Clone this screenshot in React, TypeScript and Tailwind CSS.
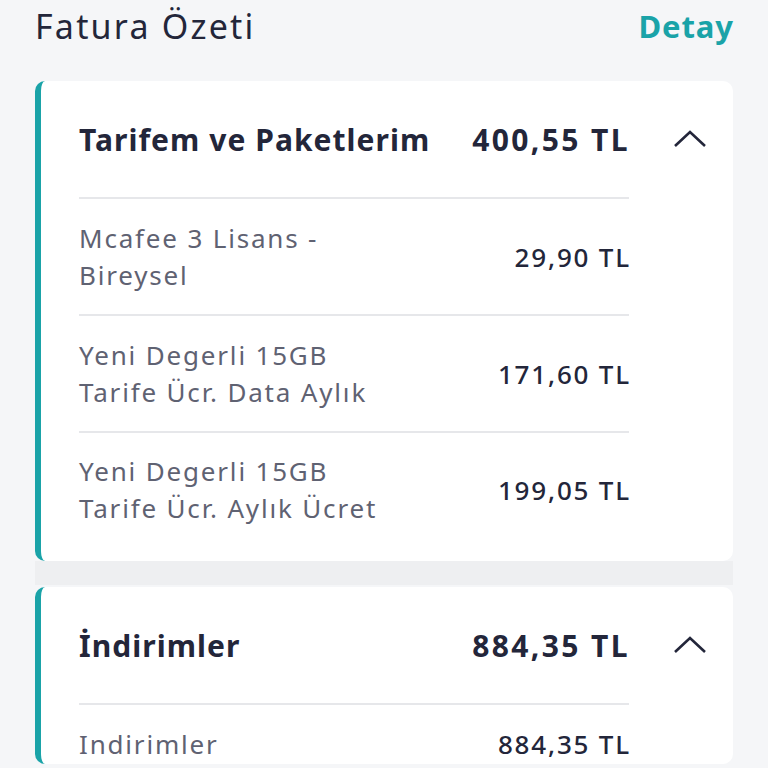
const tarife = [
  { ad: ['Mcafee 3 Lisans -', 'Bireysel'], tutar: '29,90 TL' },
  { ad: ['Yeni Degerli 15GB', 'Tarife Ücr. Data Aylık'], tutar: '171,60 TL' },
  { ad: ['Yeni Degerli 15GB', 'Tarife Ücr. Aylık Ücret'], tutar: '199,05 TL' },
]

function Chevron() {
  return (
    <svg width="34" height="20" viewBox="0 0 34 20" className="ml-[43px] shrink-0">
      <polyline points="2,17 17,3 32,17" fill="none" stroke="#23263a" strokeWidth="2.6" />
    </svg>
  )
}

function Kalem({ ad, tutar, son }: { ad: string[]; tutar: string; son?: boolean }) {
  return (
    <div className={`flex items-center justify-between ${son ? 'pt-[20px] pb-[34px]' : 'border-b-2 border-[#e6e7ea] pt-[21px] pb-[20px]'}`}>
      <div className="text-[26px] leading-[37px] tracking-[0.07em] text-[#5f6272]">
        {ad.map((s) => <div key={s}>{s}</div>)}
      </div>
      <span className="-mr-[2px] text-[26px] font-medium tracking-[0.07em] text-[#23263a]">{tutar}</span>
    </div>
  )
}

function Kart({ baslik, toplam, children }: { baslik: string; toplam: string; children: React.ReactNode }) {
  return (
    <div className="rounded-[10px] border-l-[6px] border-[#1aa3a8] bg-white">
      <div className="ml-[38px] mr-[26px] flex h-[116px] items-center">
        <span className="flex-1 text-[30px] font-bold tracking-[0.035em] text-[#23263a]">{baslik}</span>
        <span className="text-[30px] font-bold tracking-[0.08em] text-[#23263a]">{toplam}</span>
        <Chevron />
      </div>
      <div className="ml-[38px] mr-[104px] border-t-2 border-[#e6e7ea]">{children}</div>
    </div>
  )
}

export default function App() {
  return (
    <div className="h-[768px] overflow-hidden bg-[#f5f6f8] px-[35px]" style={{ fontFamily: '"Noto Sans", Lato, sans-serif' }}>
      <div className="flex items-center justify-between pt-[2px]">
        <h1 className="text-[34px] leading-[48px] tracking-[0.065em] text-[#23263a]">Fatura Özeti</h1>
        <span className="-mr-[1px] text-[31px] font-bold tracking-[0.03em] text-[#1aa3a8]">Detay</span>
      </div>
      <div className="mt-[31px]">
        <Kart baslik="Tarifem ve Paketlerim" toplam="400,55 TL">
          {tarife.map((k, i) => <Kalem key={i} ad={k.ad} tutar={k.tutar} son={i === tarife.length - 1} />)}
        </Kart>
      </div>
      <div className="h-[24px] bg-[#eeeff1]" />
      <div className="mt-[2px]">
        <Kart baslik="İndirimler" toplam="884,35 TL">
          <div className="flex items-center justify-between pt-[20px]">
            <span className="text-[26px] tracking-[0.07em] text-[#5f6272]">Indirimler</span>
            <span className="-mr-[2px] text-[26px] font-medium tracking-[0.07em] text-[#23263a]">884,35 TL</span>
          </div>
        </Kart>
      </div>
    </div>
  )
}
